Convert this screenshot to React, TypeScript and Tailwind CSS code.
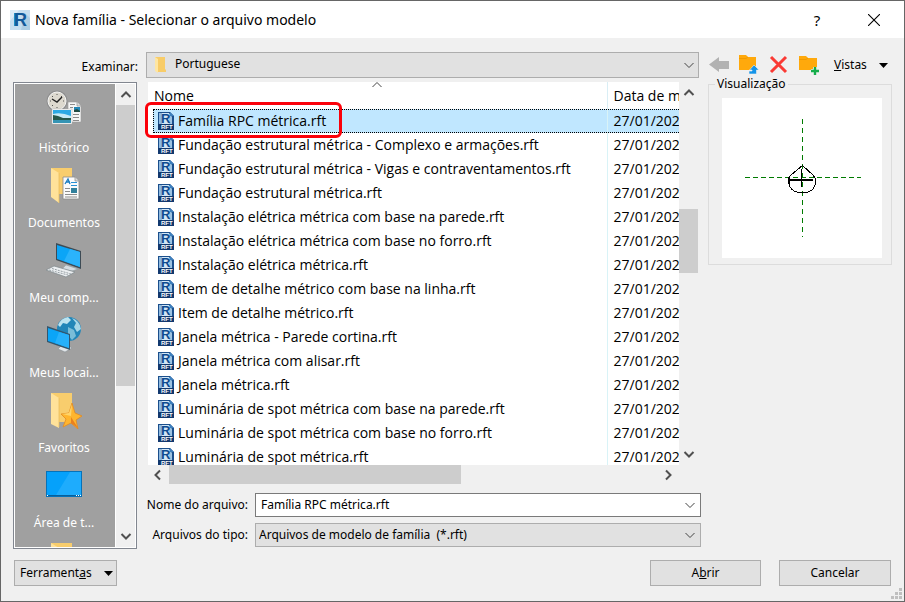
import React, { useState } from 'react'

const files = [
  'Família RPC métrica.rft',
  'Fundação estrutural métrica - Complexo e armações.rft',
  'Fundação estrutural métrica - Vigas e contraventamentos.rft',
  'Fundação estrutural métrica.rft',
  'Instalação elétrica métrica com base na parede.rft',
  'Instalação elétrica métrica com base no forro.rft',
  'Instalação elétrica métrica.rft',
  'Item de detalhe métrico com base na linha.rft',
  'Item de detalhe métrico.rft',
  'Janela métrica - Parede cortina.rft',
  'Janela métrica com alisar.rft',
  'Janela métrica.rft',
  'Luminária de spot métrica com base na parede.rft',
  'Luminária de spot métrica com base no forro.rft',
  'Luminária de spot métrica.rft',
]

type ChevronProps = { dir: 'up' | 'down' | 'left' | 'right'; bold?: boolean }

function Chevron({ dir, bold }: ChevronProps) {
  const paths = {
    up: 'M1.5 8 L6 3.5 L10.5 8',
    down: 'M1.5 4 L6 8.5 L10.5 4',
    left: 'M8 1.5 L3.5 6 L8 10.5',
    right: 'M4 1.5 L8.5 6 L4 10.5',
  }
  return (
    <svg viewBox="0 0 12 12" className="size-3 shrink-0" fill="none" stroke={bold ? '#505050' : '#444'} strokeWidth={bold ? 2 : 1}>
      <path d={paths[dir]} />
    </svg>
  )
}

function Triangle() {
  return (
    <svg viewBox="0 0 9 5" className="h-[5px] w-[9px] shrink-0">
      <path d="M0 0H9L4.5 5Z" fill="#000" />
    </svg>
  )
}

function RevitLogo() {
  return (
    <svg viewBox="0 0 20 20" className="size-5 shrink-0">
      <rect width="20" height="20" fill="#c4ddef" />
      <path d="M0 0H9L0 11Z" fill="#dcebf6" />
      <path d="M15 3L20 8V20H11Z" fill="#aecde3" />
      <path d="M4 3H8V16H4Z" fill="#1f8fd0" />
      <text x="4" y="16" fontFamily="Liberation Sans, sans-serif" fontWeight="700" fontSize="18" fill="#12599a">R</text>
    </svg>
  )
}

function FileIcon() {
  return (
    <svg viewBox="0 0 16 18" className="h-[18px] w-4 shrink-0">
      <path d="M0 0H12L16 4V18H0Z" fill="#1b4f8c" />
      <path d="M1 1H11V12H1Z" fill="#d3e6f5" />
      <path d="M1 1H4V12H1Z" fill="#8fb9de" />
      <path d="M11 1V12H14V5Z" fill="#9fc3e2" />
      <path d="M12 0V4H16Z" fill="#3e7fbd" />
      <text x="3" y="11" fontFamily="Liberation Sans, sans-serif" fontWeight="700" fontSize="13" fill="#0d4b90">R</text>
      <rect y="12" width="16" height="6" fill="#12386e" />
      <text x="3" y="17" fontFamily="Liberation Sans, sans-serif" fontWeight="700" fontSize="6" fill="#fff">RFT</text>
    </svg>
  )
}

function HistoryIcon() {
  return (
    <svg viewBox="0 3 36 36" className="size-9 overflow-visible">
      <path d="M22 12H31L35 16V32H22Z" fill="#f7f7f7" stroke="#9a9a9a" strokeWidth=".6" />
      <path d="M31 12V16H35" fill="#ddd" stroke="#888" strokeWidth=".6" />
      <path d="M24 14.5H29M24 17.5H27M27 24.5H33M27 27.5H33M27 30.5H33" stroke="#8b8b8b" />
      <rect x="28" y="17" width="6" height="5" fill="#2286b5" />
      <path d="M28 22V20L31 19L34 21V22Z" fill="#234b42" />
      <circle cx="11" cy="11" r="10.5" fill="#8d8d8d" />
      <circle cx="11" cy="11" r="9" fill="#ddd9cf" stroke="#f5f5f5" />
      <path d="M11 4V5M11 17V18M4 11H5M17 11H18M6 6L7 7M16 6L15 7M6 16L7 15" stroke="#555" />
      <path d="M6 9L11 12L16 7" stroke="#222" strokeWidth="1.4" fill="none" />
      <rect x="6" y="19" width="20" height="15" fill="#fff" stroke="#aaa" strokeWidth=".5" />
      <rect x="7" y="20" width="18" height="13" fill="#2da9e4" />
      <path d="M7 24Q15 22 25 26V29H7Z" fill="#c7eaf6" />
      <path d="M7 25L12 26L17 28L25 28V30L7 31Z" fill="#28584b" />
      <path d="M7 30H25V33H7Z" fill="#3594b4" />
    </svg>
  )
}

function DocumentsIcon() {
  return (
    <svg viewBox="0 0 36 36" className="size-9">
      <path d="M5 0H26V26H12Z" fill="#f8cd6d" />
      <path d="M5 0L13 5V35L5 29Z" fill="#ffe29a" />
      <path d="M13 5V35" stroke="#e9bb58" strokeWidth=".7" />
      <path d="M17 9H29L33 13V31H17Z" fill="#fbfbfb" stroke="#8c8c8c" strokeWidth=".8" />
      <path d="M29 9V13H33" fill="#ddd" stroke="#888" strokeWidth=".7" />
      <path d="M19 16L22 11L24 16M20 14H24" fill="none" stroke="#1c7dc0" strokeWidth="1.3" />
      <path d="M25 14.5H31M25 17.5H31" stroke="#2791d5" />
      <path d="M19 20.5H24M19 23.5H24M19 26.5H31M19 29H31" stroke="#8d8d8d" />
      <rect x="25" y="20" width="6" height="5" fill="#31809c" />
    </svg>
  )
}

function ComputerIcon() {
  return (
    <svg viewBox="0 0 36 36" className="size-9">
      <path d="M10 0L35 8V26L10 17Z" fill="#3d4b55" />
      <path d="M11 2L34 9V24L11 16Z" fill="#0ba5f7" />
      <path d="M24 6L34 9V24L18 18Z" fill="#2bb3fb" />
      <path d="M20 22L26 24L32 26L26 28L16 26Z" fill="#d5dde2" stroke="#8c989f" strokeWidth=".5" />
      <path d="M0 27L8 23L29 29L20 34Z" fill="#eceff1" stroke="#7d868b" strokeWidth=".7" />
      <path d="M3 27L22 32M6 25.5L25 31" stroke="#98a1a6" strokeDasharray="2 1" />
    </svg>
  )
}

function NetworkIcon() {
  return (
    <svg viewBox="0 1 36 36" className="size-9 overflow-visible">
      <circle cx="23" cy="12" r="12" fill="#2286b8" />
      <path d="M12 8Q15 1 22 0L25 3L21 7L17 6L14 10Z" fill="#bce3ef" />
      <path d="M26 1Q34 4 35 12L31 15L28 10L30 6Z" fill="#a6d6e7" />
      <path d="M22 10L28 13L30 19L26 23L22 18Z" fill="#79bdd8" />
      <path d="M15 29L21 28L26 31L19 35L12 32Z" fill="#e1e5e8" stroke="#7f888e" strokeWidth=".5" />
      <path d="M1 9L24 17V33L1 25Z" fill="#34566d" />
      <path d="M2 11L23 18V31L2 24Z" fill="#0ba5f7" />
      <path d="M13 15L23 18V31L9 26Z" fill="#26b1fb" />
    </svg>
  )
}

function FavoritesIcon() {
  return (
    <svg viewBox="0 0 36 36" className="size-9">
      <path d="M5 0H26V29H12Z" fill="#f8cd6d" />
      <path d="M5 0L13 5V35L5 31Z" fill="#ffe29a" />
      <path d="M13 5V34" stroke="#e9bb58" strokeWidth=".7" />
      <path d="M26 10L29 20L36 23L30 27L32 36L25 30L17 34L20 26L15 21L23 20Z" fill="#ffb52e" stroke="#e38a1f" strokeWidth=".8" />
      <path d="M26 11L25 23L16 21L23 20Z" fill="#ffd46a" />
      <path d="M25 24L32 35L25 30Z" fill="#e9801f" />
    </svg>
  )
}

function DesktopIcon() {
  return (
    <svg viewBox="0 0 36 36" className="size-9">
      <rect x=".5" y="3.5" width="35" height="25" fill="#05a1fb" stroke="#0672b9" />
      <path d="M24 4H35V27H10Z" fill="#1eacfd" />
      <path d="M1 27.5H35" stroke="#075f9b" />
      <path d="M1 27.5H3M30 27.5H35" stroke="#fff" strokeDasharray="1 1" />
    </svg>
  )
}

function FolderTop() {
  return (
    <svg viewBox="0 0 36 36" className="size-9">
      <path d="M5 0H26V26H5Z" fill="#f8cd6d" />
      <path d="M5 0L13 5V35L5 29Z" fill="#ffe29a" />
    </svg>
  )
}

const places = [
  { label: 'Histórico', icon: <HistoryIcon /> },
  { label: 'Documentos', icon: <DocumentsIcon /> },
  { label: 'Meu comp...', icon: <ComputerIcon /> },
  { label: 'Meus locai...', icon: <NetworkIcon /> },
  { label: 'Favoritos', icon: <FavoritesIcon /> },
  { label: 'Área de t...', icon: <DesktopIcon /> },
]

function TitleBar() {
  return (
    <header className="flex h-[37px] shrink-0 items-center bg-white pr-5 pl-[9px] font-['Noto_Sans','Open_Sans',sans-serif]">
      <RevitLogo />
      <h1 className="ml-[5px] flex-1 text-[14px] leading-5 text-black">Nova família - Selecionar o arquivo modelo</h1>
      <button aria-label="Ajuda" className="mr-[37px] w-5 text-[15px] leading-5">?</button>
      <button aria-label="Fechar" className="flex w-5 justify-center">
        <svg viewBox="0 0 12 12" className="size-3" stroke="#000" strokeWidth="1.1">
          <path d="M0 0L12 12M12 0L0 12" />
        </svg>
      </button>
    </header>
  )
}

function Toolbar() {
  return (
    <div className="flex w-[183px] shrink-0 items-center gap-2.5">
      <button aria-label="Voltar">
        <svg viewBox="0 0 20 20" className="size-5">
          <path d="M0 9.500L10 2V6H20V14H10V17Z" fill="#b2b2b2" />
        </svg>
      </button>
      <button aria-label="Um nível acima">
        <svg viewBox="0 0 20 20" className="size-5 overflow-visible">
          <path d="M0 0H7L9 2H17V15H0Z" fill="#ffa90c" />
          <path d="M0 3.500H7L9 2" fill="none" stroke="#f29a00" />
          <path d="M15 10L20 15H17.500V19H10V16H13V15H10.500Z" fill="#1494e9" stroke="#f0f0f0" strokeWidth=".6" />
        </svg>
      </button>
      <button aria-label="Excluir">
        <svg viewBox="0 0 20 20" className="size-5" stroke="#fa3a34" strokeWidth="3">
          <path d="M2 2L17 17M17 2L2 17" />
        </svg>
      </button>
      <button aria-label="Nova pasta">
        <svg viewBox="0 0 20 20" className="size-5 overflow-visible">
          <path d="M0 1H7L9 3H18V15H0Z" fill="#ffa90c" />
          <path d="M0 4.500H7L9 3" fill="none" stroke="#f29a00" />
          <path d="M16 12V20M12 16H20" stroke="#f0f0f0" strokeWidth="4" />
          <path d="M16 12V20M12 16H20" stroke="#16ad4b" strokeWidth="2.4" />
        </svg>
      </button>
      <button className="ml-[5px] flex items-center gap-3">
        <span><u>V</u>istas</span>
        <Triangle />
      </button>
    </div>
  )
}

function PlacesBar() {
  return (
    <nav className="flex h-[467px] w-[124px] shrink-0 border border-[#828790] bg-white p-px">
      <ul className="flex-1 overflow-hidden bg-[#a0a0a0] pt-[9px] pr-[2px]">
        {places.map((place) => (
          <li key={place.label} className="h-[75px]">
            <button className="flex w-full flex-col items-center text-white">
              {place.icon}
              <span className="mt-[10px] leading-[18px]">{place.label}</span>
            </button>
          </li>
        ))}
        <li className="flex justify-center"><FolderTop /></li>
      </ul>
      <div className="ml-px flex w-[19px] flex-col items-center bg-[#f0f0f0]">
        <span className="flex h-[21px] items-center"><Chevron dir="up" bold /></span>
        <div className="h-[281px] w-full bg-[#cdcdcd]" />
        <span className="mt-auto flex h-[22px] items-center"><Chevron dir="down" bold /></span>
      </div>
    </nav>
  )
}

function FileList({ selected, onSelect }: { selected: string; onSelect: (name: string) => void }) {
  return (
    <div className="relative mr-[10px] ml-[2px] min-w-0 flex-1 font-['Open_Sans','Noto_Sans',sans-serif] text-[14px] leading-5">
      <div className="flex h-[383px]">
        <div className="relative min-w-0 flex-1 overflow-hidden bg-white">
          <table className="w-full table-fixed border-collapse">
            <thead>
              <tr className="h-[27px] text-left">
                <th className="border-r border-[#d9eef5] p-0 pl-[6px] font-normal">Nome</th>
                <th className="w-[72px] overflow-hidden p-0 pl-[6px] font-normal whitespace-nowrap">Data de modificação</th>
              </tr>
            </thead>
            <tbody>
              {files.map((name) => (
                <tr key={name} className="h-6" onClick={() => onSelect(name)}>
                  <td className="border-r border-[#d9f3f7] p-0 pl-[5px]">
                    <div className={name === selected ? 'flex h-6 items-center gap-1 border-y border-dotted border-l border-black bg-[#c0e7ff] pl-1' : 'flex h-6 items-center gap-1 pl-[5px]'}>
                      <FileIcon />
                      <span className="whitespace-nowrap">{name}</span>
                    </div>
                  </td>
                  <td className="overflow-hidden p-0 whitespace-nowrap">
                    <div className={name === selected ? 'flex h-6 items-center border-y border-dotted border-black bg-[#c0e7ff] pl-[6px]' : 'flex h-6 items-center pl-[6px]'}>
                      27/01/2021 10:15
                    </div>
                  </td>
                </tr>
              ))}
            </tbody>
          </table>
          <span className="absolute top-[-3px] left-[223px]"><Chevron dir="up" /></span>
        </div>
        <div className="flex w-[19px] flex-col items-center">
          <span className="flex h-[22px] items-center"><Chevron dir="up" bold /></span>
          <div className="mt-[105px] h-16 w-full bg-[#cdcdcd]" />
          <span className="mt-auto flex h-[22px] items-center"><Chevron dir="down" bold /></span>
        </div>
      </div>
      <div className="mr-[19px] flex h-[19px] items-center">
        <span className="ml-1 w-[17px]"><Chevron dir="left" bold /></span>
        <div className="h-full w-[55%] bg-[#cdcdcd]" />
        <span className="mr-[5px] ml-auto"><Chevron dir="right" bold /></span>
      </div>
      {/* highlight around the selected template */}
      <div className="pointer-events-none absolute top-5 -left-[3px] h-9 w-[197px] rounded-[6px] border-3 border-[#fb0009]" />
    </div>
  )
}

function Preview() {
  return (
    <fieldset className="-mt-[7px] h-[190px] w-[184px] shrink-0 border border-[#dcdcdc] pr-[9px] pl-[13px]">
      <legend className="-ml-[7px] px-[2px] leading-[18px]">Visualização</legend>
      <svg viewBox="0 0 160 160" className="mt-[5px] size-40 bg-white" fill="none" shapeRendering="crispEdges">
        <path d="M80.5 21V139" stroke="#007b00" strokeDasharray="5 4" />
        <path d="M23 79.5H139" stroke="#007b00" strokeDasharray="5 3" />
        <path d="M80.500 67.500L91 77Q94 80 94 84C93 90 89 94 84 94.500H76C70 93 67 89 66.500 84Q66 80 69 77Z" stroke="#000" />
        <path d="M67 82H91" stroke="#000" strokeWidth="2" />
        <path d="M79.500 71V89" stroke="#000" />
        <path d="M67 79V86" stroke="#000" strokeWidth="2" />
      </svg>
    </fieldset>
  )
}

export default function App() {
  const [selected, setSelected] = useState(files[0])

  return (
    <div className="flex min-h-screen flex-col border border-[#666] bg-[#f0f0f0] font-['Noto_Sans',sans-serif] text-[12px] leading-[18px] text-black">
      <TitleBar />
      <main className="relative flex flex-1 flex-col px-3 pt-[14px]">
        <div className="flex h-[26px] items-center">
          <label htmlFor="folder" className="mr-2 w-[125px] pt-[3px] text-right">Examinar:</label>
          <div className="relative mr-[10px] h-[26px] min-w-0 flex-1">
            <select id="folder" className="h-full w-full appearance-none border border-[#adadad] bg-[#e1e1e1] pb-[2px] pl-7">
              <option>Portuguese</option>
            </select>
            <svg viewBox="0 0 12 16" className="pointer-events-none absolute top-[5px] left-2 h-4 w-3">
              <path d="M1 0H11V12L12 13V15H4Z" fill="#f8cc68" />
              <path d="M1 0L4 2V16L1 14Z" fill="#ffe6a2" />
            </svg>
            <span className="pointer-events-none absolute top-[7px] right-1"><Chevron dir="down" /></span>
          </div>
          <Toolbar />
        </div>

        <div className="mt-1 flex">
          <PlacesBar />
          <div className="ml-[9px] min-w-0 flex-1">
            <div className="flex">
              <FileList selected={selected} onSelect={setSelected} />
              <Preview />
            </div>
            <div className="mt-[9px] mr-[191px] grid grid-cols-[102px_1fr] items-center gap-x-[7px] gap-y-[6px]">
              <label htmlFor="filename" className="text-right whitespace-nowrap">Nome do arquivo:</label>
              <div className="flex h-6 items-center border border-[#7a7a7a] bg-white pr-1">
                <input
                  id="filename"
                  value={selected}
                  onChange={(e) => setSelected(e.target.value)}
                  className="min-w-0 flex-1 pl-[5px] outline-none"
                />
                <button aria-label="Mostrar nomes"><Chevron dir="down" /></button>
              </div>
              <label htmlFor="filetype" className="text-right whitespace-nowrap">Arquivos do tipo:</label>
              <div className="relative h-6">
                <select id="filetype" className="h-full w-full appearance-none border border-[#adadad] bg-[#e1e1e1] pl-[3px]">
                  <option>Arquivos de modelo de família &nbsp;(*.rft)</option>
                </select>
                <span className="pointer-events-none absolute top-[6px] right-[5px]"><Chevron dir="down" /></span>
              </div>
            </div>
          </div>
        </div>

        <footer className="mt-[11px] flex items-center px-px">
          <button className="flex h-[26px] w-[103px] items-center justify-between border border-[#adadad] bg-[#e1e1e1] pr-[3px] pl-[5px]">
            <span>Ferrament<u>a</u>s</span>
            <Triangle />
          </button>
          <button className="mr-[18px] ml-auto h-[26px] w-[111px] border border-[#adadad] bg-[#e1e1e1]">A<u>b</u>rir</button>
          <button className="h-[26px] w-28 border border-[#adadad] bg-[#e1e1e1]">Cancelar</button>
        </footer>

        <svg viewBox="0 0 11 11" className="absolute right-[2px] bottom-[2px] size-[11px]" fill="#bfbfbf">
          <path d="M8 0h3v3h-3zM4 4h3v3h-3zM8 4h3v3h-3zM0 8h3v3h-3zM4 8h3v3h-3zM8 8h3v3h-3z" />
        </svg>
      </main>
    </div>
  )
}
